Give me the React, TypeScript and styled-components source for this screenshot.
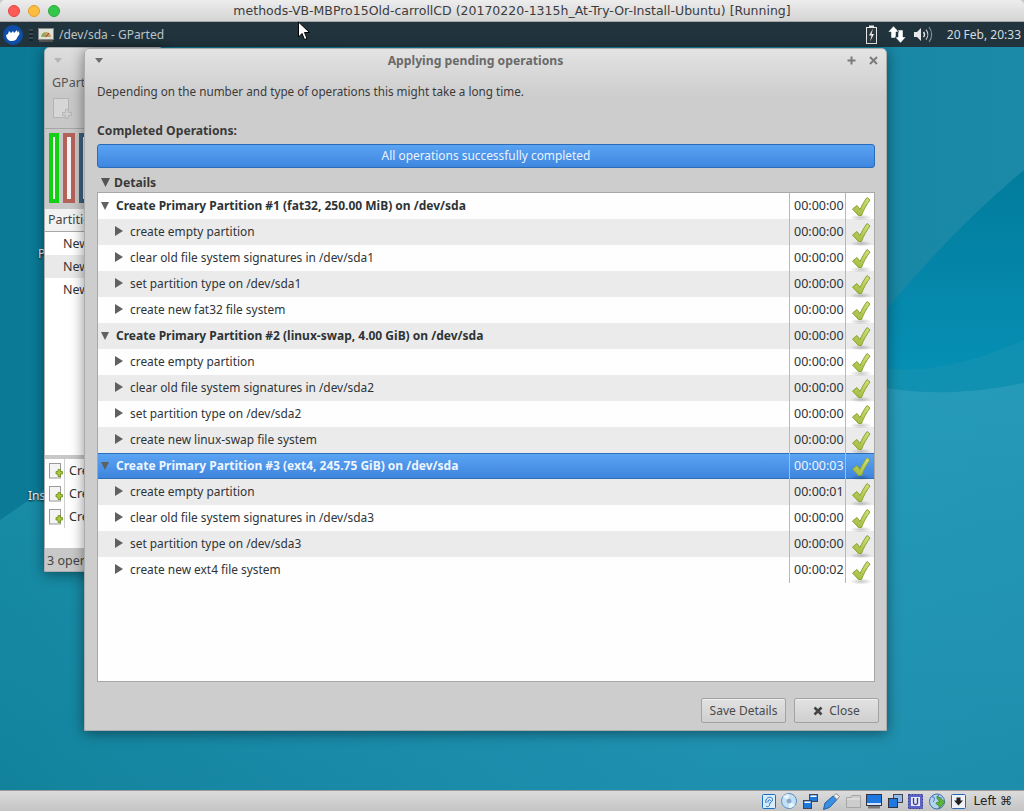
import React from "react";
import styled, { createGlobalStyle } from "styled-components";

const Global = createGlobalStyle`
  html, body { margin: 0; padding: 0; height: 100%; overflow: hidden; }
  #root { height: 100%; }
  * { box-sizing: border-box; }
`;

const Screen = styled.div`
  width: 1024px; height: 811px; display: flex; flex-direction: column; position: relative;
  font-family: "Noto Sans", sans-serif; font-size: 11.9px; color: #2e3436; overflow: hidden;
  background: #c8c8c8;
`;
const MacBar = styled.header`
  height: 22px; flex: none; position: relative; display: flex; align-items: center; justify-content: center;
  background: linear-gradient(#ededed, #d4d4d4); border-bottom: 1px solid #a8a8a8; border-radius: 5px 5px 0 0;
  font-family: "DejaVu Sans", sans-serif; font-size: 12.5px; color: #3c3c3c;
`;
const Lights = styled.div`
  position: absolute; left: 8px; top: 5px; display: flex; gap: 8px;
`;
const Light = styled.span<{ $c: string; $b: string }>`
  width: 12px; height: 12px; border-radius: 50%; background: ${p => p.$c}; border: 1px solid ${p => p.$b};
`;
const Cursor = styled.svg`
  position: absolute; left: 297px; top: 21px; z-index: 5;
`;
const Desktop = styled.main`
  flex: 1; position: relative; overflow: hidden; background: #14829f;
`;
const Wallpaper = styled.svg`
  position: absolute; left: 0; top: 0;
`;
const Panel = styled.div`
  position: relative; height: 25px; display: flex; align-items: center; background: #21343d; color: #bcc6c9; font-size: 12px; padding-left: 3px;
`;
const Grip = styled.span`
  width: 4px; height: 12px; margin: 0 5px 0 6px;
  background: repeating-linear-gradient(#3c4a50 0 2px, #15232a 2px 4px);
`;
const PanelTitle = styled.span` margin-left: 5px; flex: 1; `;
const TrayIcon = styled.span<{ $ml: number }>`
  display: flex; align-items: center; margin-left: ${p => p.$ml}px;
`;
const Clock = styled.span` margin: 0 3px 0 14px; color: #d6dcde; `;

const Window = styled.section<{ $x: number; $y: number; $w: number; $h: number }>`
  position: absolute; left: ${p => p.$x}px; top: ${p => p.$y}px; width: ${p => p.$w}px; height: ${p => p.$h}px;
  background: linear-gradient(#e3e3e3 0, #cdcdcd 48px, #cdcdcd 100%); border: 1px solid #a9adad; border-radius: 5px 5px 0 0;
  box-shadow: 0 2px 14px rgba(0, 0, 0, .45);
  display: flex; flex-direction: column;
`;
const BackWindow = styled(Window)`
  background: linear-gradient(#dedede 0, #c8c8c8 48px, #c8c8c8 100%); color: #555; overflow: hidden;
`;
const BackTitle = styled.div` height: 26px; padding: 10px 0 0 9px; flex: none; display: flex; align-items: flex-start; `;
const BackMenu = styled.div` padding: 0 0 0 7px; height: 22px; flex: none; line-height: 18px; font-size: 12.5px; `;
const BackTools = styled.div` height: 33px; padding: 2px 0 0 8px; flex: none; border-bottom: 1px solid #a6a6a6; `;
const BackMap = styled.div` height: 80px; flex: none; display: flex; gap: 4px; padding: 4px 0 0 4px; `;
const MapPart = styled.div<{ $c: string; $w: number; $t: number }>`
  width: ${p => p.$w}px; height: 70px; border: solid ${p => p.$c}; border-width: 4px ${p => p.$t}px; background: #f4f4f4; flex: none;
`;
const BackListHead = styled.div` height: 23px; padding-left: 3px; background: #f2f2f2; border-bottom: 1px solid #a8a8a8; line-height: 22px; color: #444; flex: none; font-size: 12.5px; `;
const BackRow = styled.div<{ $alt?: boolean }>`
  height: 23px; padding-left: 18px; line-height: 23px; color: #333; font-size: 12.5px; background: ${p => p.$alt ? "#e9e9e9" : "#fff"};
`;
const BackList = styled.div` height: 223px; flex: none; background: #fff; `;
const Pane = styled.div`
  height: 93px; flex: none; background: #fff; border-top: 4px solid #c8c8c8;
`;
const OpRow = styled.div`
  height: 23px; display: flex; align-items: center; padding-left: 4px; color: #333; font-size: 12.5px;
`;
const OpText = styled.span`
  height: 100%; padding-left: 4px; line-height: 23px; border-left: 1px solid #cfcfcf;
`;
const BackStatus = styled.div` flex: 1; padding-left: 2px; line-height: 25px; color: #444; font-size: 12.5px; `;
const DesktopLabel = styled.span<{ $x: number; $y: number }>`
  position: absolute; left: ${p => p.$x}px; top: ${p => p.$y}px; color: #eef; font-size: 12px; text-shadow: 0 1px 2px #000;
`;

const DialogHead = styled.div`
  height: 24px; flex: none; display: flex; align-items: center; padding: 0 8px 2px 10px;
`;
const DialogTitle = styled.h1`
  flex: 1; margin: 0; text-align: center; font-size: 12.2px; font-weight: 700; color: #6a6a6a; padding-left: 1px;
`;
const CtlGap = styled.span` width: 13px; `;
const DialogBody = styled.div`
  flex: 1; display: flex; flex-direction: column; padding: 0 11px 0 12px; min-height: 0;
`;
const Lead = styled.p` margin: 9px 0 0; height: 18px; line-height: 18px; color: #3a3a3a; font-size: 11.7px; `;
const Strong = styled.div` margin-top: 22px; height: 18px; line-height: 18px; font-weight: 700; color: #3a3a3a; font-size: 12.15px; `;
const Progress = styled.div`
  margin-top: 4px; height: 24px; flex: none; border: 1px solid #2a6cb8; border-radius: 3px; text-align: center; line-height: 20px;
  background: linear-gradient(#5aa3f2, #3f86e0); color: #eaf3ff;
`;
const Expander = styled.div`
  margin-top: 5px; height: 19px; padding-bottom: 1px; display: flex; align-items: center; gap: 4px; padding-left: 4px; font-weight: 700; color: #3a3a3a; font-size: 12.2px;
`;
const Tree = styled.div`
  height: 490px; flex: none; background: #fefefe; border: 1px solid #a8a8a8;
`;
const Row = styled.div<{ $alt?: boolean; $sel?: boolean }>`
  height: 26px; display: grid; grid-template-columns: 691px 56px 1fr; grid-template-rows: 26px;
  background: ${p => p.$sel ? "linear-gradient(#5ca5f4, #3d83dc)" : p.$alt ? "#ebebeb" : "#fefefe"};
  color: ${p => p.$sel ? "#eef5ff" : "#2e3436"};
  ${p => p.$sel && "box-shadow: inset 0 1px #2f6fb8, inset 0 -1px #2f6fb8;"}
`;
const NameCell = styled.div<{ $child?: boolean; $bold?: boolean }>`
  display: flex; align-items: center; padding: 0 0 ${p => p.$child ? 3 : 1}px ${p => p.$child ? 17 : 3}px; gap: 7px;
  font-size: ${p => p.$bold ? 12 : 11.9}px;
  font-weight: ${p => p.$bold ? 700 : 400}; white-space: nowrap; overflow: hidden;
`;
const TimeCell = styled.div`
  display: flex; align-items: center; padding: 0 0 1px 4px; border-left: 1px solid #b9b9b9; font-size: 12.5px;
`;
const IconCell = styled.div`
  padding: 4px 0 0 6px; border-left: 1px solid #b9b9b9;
`;
const DialogActions = styled.div`
  flex: none; display: flex; justify-content: flex-end; gap: 8px; padding: 16px 7px 0 0; margin-right: -11px;
`;
const Btn = styled.button`
  width: 85px; height: 25px; padding: 0; border: 1px solid #a2a2a2; border-radius: 2px; font: inherit; font-size: 12px; color: #4a4a4a;
  background: linear-gradient(#e2e2e2, #cfcfcf); display: flex; align-items: center; justify-content: center; gap: 6px;
  box-shadow: inset 0 1px rgba(255,255,255,.45);
`;
const VBoxBar = styled.footer`
  height: 21px; flex: none; display: flex; align-items: center; justify-content: flex-end; gap: 5.5px; padding-right: 12px;
  background: linear-gradient(#dcdcdc, #c4c4c4); border-top: 1px solid #9a9a9a; font-family: "DejaVu Sans", sans-serif; font-size: 12px; color: #222;
`;
const HostKey = styled.span` margin-left: 2px; `;

const Tri = ({ down, c = "#606060", w = 8, h = 8 }: { down?: boolean; c?: string; w?: number; h?: number }) => (
  <svg width={w} height={h} viewBox="0 0 10 10" preserveAspectRatio="none" style={{ flex: "none" }}>
    <path d={down ? "M0 0H10L5 10Z" : "M0 0V10L10 5Z"} fill={c} />
  </svg>
);

const Check = () => (
  <svg width="22" height="25" viewBox="-2 0 22 25" style={{ display: "block", marginLeft: -2, overflow: "visible" }}>
    <defs>
      <linearGradient id="chk" x1="0.8" y1="0" x2="0.3" y2="1">
        <stop offset="0" stopColor="#cfe07c" />
        <stop offset="1" stopColor="#a3bc42" />
      </linearGradient>
      <radialGradient id="chkShadow">
        <stop offset="0" stopColor="#000" stopOpacity=".22" />
        <stop offset="1" stopColor="#000" stopOpacity="0" />
      </radialGradient>
    </defs>
    <ellipse cx="9" cy="20.5" rx="11" ry="3" fill="url(#chkShadow)" />
    <path d="M.5 12L5 8.5L8 12.5C10 8 12.5 4 15 .5L18 3C14.5 7.5 11.5 13 9.5 18.5H6.5Z" fill="url(#chk)" stroke="#8aa332" strokeWidth="1" strokeLinejoin="round" />
  </svg>
);

const DocIcon = () => (
  <svg width="15" height="16" viewBox="0 0 15 16" style={{ flex: "none" }}>
    <rect x=".5" y=".5" width="11" height="14.5" fill="#f4f4f4" stroke="#9a9a9a" />
    <path d="M9 8.5V6.5H11.5V8.5H13.5V11H11.5V13.5H9V11H7V8.5Z" fill="#a7c83c" stroke="#6d8a1c" strokeWidth=".8" />
  </svg>
);
const FadedDoc = () => (
  <svg width="19" height="23" viewBox="0 0 19 23">
    <rect x=".5" y=".5" width="15" height="19" fill="#d6d6d6" stroke="#b4b4b4" />
    <path d="M9.5 14.5H12.5V11.5H15.5V14.5H18.5V17.5H15.5V20.5H12.5V17.5H9.5Z" fill="#cfcfcf" stroke="#b4b4b4" />
  </svg>
);

const Whale = () => (
  <svg width="20" height="20" viewBox="0 0 20 20">
    <circle cx="10" cy="10" r="10" fill="#0e4ea6" />
    <path d="M3 10l2-1 1-3 2 2 2-2 1 2 3-3 .5 2.5L16 6l.5 3-2 3c-1 3-3 4-6 4-3 0-5-2-5.5-6z" fill="#fff" />
  </svg>
);
const MeterIcon = () => (
  <svg width="16" height="14" viewBox="0 0 16 14">
    <rect x=".5" y=".5" width="15" height="11" fill="#dfe3d8" stroke="#888" />
    <path d="M3 9a5 5 0 0 1 10 0z" fill="#c9a065" />
    <path d="M3.5 8a5 5 0 0 1 3-3.5L8 9z" fill="#7fae5a" />
    <path d="M8 9l3-4" stroke="#a33" />
    <rect x="1" y="12" width="14" height="2" fill="#555" />
  </svg>
);
const Battery = () => (
  <svg width="11" height="19" viewBox="0 0 11 19">
    <rect x="3" y=".5" width="5" height="2" fill="#eee" />
    <rect x=".5" y="2.5" width="10" height="16" fill="#2c3a40" stroke="#e8e8e8" />
    <path d="M7 3.5L3 10.5H5.5L4 16.5L8 9H5.5Z" fill="#eee" />
  </svg>
);
const Arrows = () => (
  <svg width="18" height="17" viewBox="0 0 18 17">
    <path d="M5.5 0L11 6H8V12H3V6H0Z M10 4H15V11H18L12.5 17 7 11H10Z" fill="#fff" stroke="#21343d" strokeWidth=".5" />
  </svg>
);
const Speaker = () => (
  <svg width="19" height="17" viewBox="0 0 19 17" fill="none">
    <path d="M0 6H3L7 2V15L3 11H0Z" fill="#e8e8e8" />
    <path d="M9.5 6a4 4 0 0 1 0 5" stroke="#e8e8e8" strokeWidth="1.4" />
    <path d="M12 3.5a8 8 0 0 1 0 10" stroke="#ccc" strokeWidth="1.2" />
    <path d="M15 1a12 12 0 0 1 0 15" stroke="#8a979b" strokeWidth="1.1" />
  </svg>
);
const XMark = () => (
  <svg width="10" height="10" viewBox="0 0 10 10">
    <path d="M1.5 1.5L8.5 8.5M8.5 1.5L1.5 8.5" stroke="#444" strokeWidth="2.6" />
  </svg>
);
const WinCtl = ({ kind }: { kind: "plus" | "x" }) => (
  <svg width="9" height="9" viewBox="0 0 9 9">
    <path d={kind === "plus" ? "M4.5 .5V8.5M.5 4.5H8.5" : "M1 1L8 8M8 1L1 8"} stroke="#7b7b7b" strokeWidth="2" />
  </svg>
);

const VB = {
  Usb: () => (<svg width="14" height="15" viewBox="0 0 14 15"><rect x=".5" y=".5" width="13" height="14" rx="1" fill="#d6ecfb" stroke="#1f6fc0" /><path d="M4 9C2.5 3 10 1.5 10.5 5.5c.3 2.5-3 2.5-3 5 0 2-2 3-3.5 1.5M6 8.5c-.5-3 2.5-3.5 2.5-1.5" stroke="#1f6fc0" fill="none" /></svg>),
  Disc: () => (<svg width="16" height="16" viewBox="0 0 16 16"><circle cx="8" cy="8" r="7.5" fill="#bfe0f5" stroke="#5d8fc0" /><path d="M8 8L2 4a7 7 0 0 1 6-3zM8 8l6 4a7 7 0 0 1-6 3z" fill="#e8f4fc" /><circle cx="8" cy="8" r="2.5" fill="#8fb6e0" /><circle cx="8" cy="8" r="1" fill="#fff" stroke="#446" strokeWidth=".5" /></svg>),
  Net: () => (<svg width="15" height="15" viewBox="0 0 15 15"><rect x="6.5" y=".5" width="8" height="7" fill="#1f77d8" stroke="#445" /><rect x="7.5" y="1.5" width="6" height="1.5" fill="#fff" /><rect x=".5" y="6.5" width="8" height="8" fill="#1f77d8" stroke="#445" /><rect x="1.5" y="7.5" width="6" height="1.5" fill="#fff" /></svg>),
  Pen: () => (<svg width="17" height="17" viewBox="0 0 17 17"><path d="M.5 16.5L2 10l8-7 4 3.5-7.5 8z" fill="#3a8fe0" stroke="#1f5fa8" /><path d="M10.5 3l2.5-2.5 3.5 3-2.5 3z" fill="#f2f2f2" stroke="#888" /></svg>),
  Folder: () => (<svg width="15" height="14" viewBox="0 0 15 14"><path d="M.5 3.5H5L6 1.5H14.5V13.5H.5Z" fill="#cdcdcd" stroke="#a5a5a5" /><path d="M1 5H14" stroke="#e8e8e8" /></svg>),
  Screen: () => (<svg width="16" height="15" viewBox="0 0 16 15"><rect x=".5" y=".5" width="15" height="11" fill="#1f77e0" stroke="#334" /><rect x="1" y="9" width="14" height="2" fill="#cfe3fa" /><rect x="2" y="12" width="12" height="2.5" fill="#777" /></svg>),
  Screens: () => (<svg width="15" height="14" viewBox="0 0 15 14"><rect x="5.5" y=".5" width="9" height="8" fill="#8fbbe9" stroke="#445" /><rect x=".5" y="4.5" width="9" height="9" fill="#1f77e0" stroke="#334" /></svg>),
  Chip: () => (<svg width="15" height="15" viewBox="0 0 15 15"><rect x=".5" y=".5" width="14" height="14" fill="#5b62c8" stroke="#333a8c" strokeDasharray="2 1" /><rect x="3" y="3" width="9" height="9" fill="#e6e8fa" /><path d="M5.5 4v5c0 2 4 2 4 0V4" stroke="#333a8c" fill="none" strokeWidth="1.3" /></svg>),
  Globe: () => (<svg width="17" height="17" viewBox="0 0 17 17"><circle cx="8" cy="8.5" r="7.5" fill="#b5d4f0" stroke="#3a6ea8" /><path d="M3 4c3-1 3 3 1 5M10 2c-2 2 0 3 3 3" stroke="#3a7ac0" fill="none" /><path d="M8 5.5V3l8 6-6 6.5V12c-2 0-3-1-3-2 1-1 3-1 4-1z" fill="#5fb53a" stroke="#2f7a1c" strokeWidth=".7" /></svg>),
  Arrow: () => (<svg width="15" height="15" viewBox="0 0 15 15"><rect x=".5" y=".5" width="14" height="14" rx="1" fill="#eef2f8" stroke="#2b66b0" /><path d="M5.5 3.5h4v3h2.5l-4.5 5L3 6.5h2.5z" fill="#222" /></svg>),
};

type Op = { title: string; time: string; sel?: boolean; kids: [string, string][] };
const ops: Op[] = [
  { title: "Create Primary Partition #1 (fat32, 250.00 MiB) on /dev/sda", time: "00:00:00", kids: [["create empty partition", "00:00:00"], ["clear old file system signatures in /dev/sda1", "00:00:00"], ["set partition type on /dev/sda1", "00:00:00"], ["create new fat32 file system", "00:00:00"]] },
  { title: "Create Primary Partition #2 (linux-swap, 4.00 GiB) on /dev/sda", time: "00:00:00", kids: [["create empty partition", "00:00:00"], ["clear old file system signatures in /dev/sda2", "00:00:00"], ["set partition type on /dev/sda2", "00:00:00"], ["create new linux-swap file system", "00:00:00"]] },
  { title: "Create Primary Partition #3 (ext4, 245.75 GiB) on /dev/sda", time: "00:00:03", sel: true, kids: [["create empty partition", "00:00:01"], ["clear old file system signatures in /dev/sda3", "00:00:00"], ["set partition type on /dev/sda3", "00:00:00"], ["create new ext4 file system", "00:00:02"]] },
];

export default function App() {
  let index = 0;
  return (
    <Screen>
      <Global />
      <MacBar>
        <Lights>
          <Light $c="#fc5b57" $b="#e2463f" />
          <Light $c="#fdbc40" $b="#e0a028" />
          <Light $c="#34c84a" $b="#28a83a" />
        </Lights>
        methods-VB-MBPro15Old-carrollCD (20170220-1315h_At-Try-Or-Install-Ubuntu) [Running]
      </MacBar>
      <Cursor width="14" height="20" viewBox="0 0 14 20">
        <path d="M1.5 1V16L5 12.5 7.5 18.5 10 17.5 7.5 11.5H12.5Z" fill="#fff" stroke="#000" strokeWidth="1" />
      </Cursor>
      <Desktop>
        <Wallpaper width="1024" height="769" viewBox="0 22 1024 769">
          <defs>
            <linearGradient id="wpTop" x1="0" y1="0" x2="1" y2="0">
              <stop offset="0" stopColor="#0a7a96" />
              <stop offset=".6" stopColor="#14829f" />
              <stop offset="1" stopColor="#1b8aa9" />
            </linearGradient>
            <linearGradient id="wpLow" x1="0" y1="0" x2="1" y2="0">
              <stop offset="0" stopColor="#13869f" />
              <stop offset=".3" stopColor="#1a8dab" />
              <stop offset=".7" stopColor="#2196b5" />
              <stop offset="1" stopColor="#2193b2" />
            </linearGradient>
            <linearGradient id="wpFade" x1="0" y1="0" x2="0" y2="1">
              <stop offset="0" stopColor="#2ba2c0" stopOpacity=".45" />
              <stop offset=".4" stopColor="#2ba2c0" stopOpacity=".12" />
              <stop offset="1" stopColor="#0e6d8c" stopOpacity=".15" />
            </linearGradient>
            <linearGradient id="wpDark" x1="0" y1="0" x2="0" y2="1">
              <stop offset="0" stopColor="#027c9c" />
              <stop offset="1" stopColor="#068fb4" />
            </linearGradient>
          </defs>
          <rect x="0" y="22" width="1024" height="769" fill="url(#wpTop)" />
          <path d="M888 308Q950 232 1024 170V345C975 365 930 372 888 369Z" fill="url(#wpDark)" />
          <path d="M888 369C930 372 975 362 1024 340V383C980 392 930 396 888 388Z" fill="#1191b1" />
          <path d="M0 520L44 490C300 400 700 370 888 388C930 396 980 392 1024 383V791H0Z" fill="url(#wpLow)" />
          <path d="M0 520L44 490C300 400 700 370 888 388C930 396 980 392 1024 383V791H0Z" fill="url(#wpFade)" />
        </Wallpaper>
        <Panel>
          <Whale />
          <Grip />
          <MeterIcon />
          <PanelTitle>/dev/sda - GParted</PanelTitle>
          <TrayIcon $ml={0}><Battery /></TrayIcon>
          <TrayIcon $ml={11}><Arrows /></TrayIcon>
          <TrayIcon $ml={8}><Speaker /></TrayIcon>
          <Clock>20 Feb, 20:33</Clock>
        </Panel>
        <DesktopLabel $x={38} $y={223}>P</DesktopLabel>
        <DesktopLabel $x={28} $y={465}>Ins</DesktopLabel>
        <BackWindow $x={44} $y={25} $w={120} $h={525}>
          <BackTitle><Tri down c="#b5b5b5" w={8} h={5} /></BackTitle>
          <BackMenu>GParted</BackMenu>
          <BackTools><FadedDoc /></BackTools>
          <BackMap>
            <MapPart $c="#12d012" $w={10} $t={4} />
            <MapPart $c="#b5635a" $w={12} $t={4} />
            <MapPart $c="#3f5f7f" $w={30} $t={4} />
          </BackMap>
          <BackListHead>Partition</BackListHead>
          <BackList>
            <BackRow>New</BackRow>
            <BackRow $alt>New</BackRow>
            <BackRow>New</BackRow>
          </BackList>
          <Pane>
            <OpRow><DocIcon /><OpText>Create</OpText></OpRow>
            <OpRow><DocIcon /><OpText>Create</OpText></OpRow>
            <OpRow><DocIcon /><OpText>Create</OpText></OpRow>
          </Pane>
          <BackStatus>3 operations</BackStatus>
        </BackWindow>
        <Window $x={84} $y={26} $w={803} $h={683}>
          <DialogHead>
            <Tri down c="#6e6e6e" w={8} h={5} />
            <DialogTitle>Applying pending operations</DialogTitle>
            <WinCtl kind="plus" />
            <CtlGap />
            <WinCtl kind="x" />
          </DialogHead>
          <DialogBody>
            <Lead>Depending on the number and type of operations this might take a long time.</Lead>
            <Strong>Completed Operations:</Strong>
            <Progress>All operations successfully completed</Progress>
            <Expander><Tri down c="#555" w={9} h={9} />Details</Expander>
            <Tree>
              {ops.map(op => {
                const parentAlt = index++ % 2 === 1;
                return (
                  <React.Fragment key={op.title}>
                    <Row $alt={parentAlt} $sel={op.sel}>
                      <NameCell $bold><Tri down />{op.title}</NameCell>
                      <TimeCell>{op.time}</TimeCell>
                      <IconCell><Check /></IconCell>
                    </Row>
                    {op.kids.map(([t, d], i) => {
                      const alt = index++ % 2 === 1;
                      return (
                        <Row key={i} $alt={alt}>
                          <NameCell $child><Tri w={8} h={10} />{t}</NameCell>
                          <TimeCell>{d}</TimeCell>
                          <IconCell><Check /></IconCell>
                        </Row>
                      );
                    })}
                  </React.Fragment>
                );
              })}
            </Tree>
            <DialogActions>
              <Btn>Save Details</Btn>
              <Btn><XMark />Close</Btn>
            </DialogActions>
          </DialogBody>
        </Window>
      </Desktop>
      <VBoxBar>
        <VB.Usb /><VB.Disc /><VB.Net /><VB.Pen /><VB.Folder /><VB.Screen /><VB.Screens /><VB.Chip /><VB.Globe /><VB.Arrow />
        <HostKey>Left ⌘</HostKey>
      </VBoxBar>
    </Screen>
  );
}
